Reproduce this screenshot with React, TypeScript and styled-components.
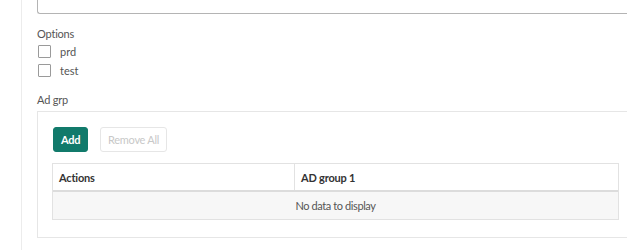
import React, { useState } from "react";
import styled, { createGlobalStyle } from "styled-components";

const GlobalStyle = createGlobalStyle`
  html, body {
    margin: 0;
    padding: 0;
    background: #ffffff;
    overflow: hidden;
  }
  body {
    font-family: Lato, "Open Sans", sans-serif;
    color: #555;
  }
`;

const Page = styled.div`
  display: flex;
  width: 627px;
  height: 250px;
  padding-left: 21px;
  box-sizing: border-box;
`;

const Column = styled.div`
  flex: 1;
  border-left: 1px solid #ececec;
  padding-left: 15px;
  display: flex;
  flex-direction: column;
`;

const TextField = styled.div`
  height: 13px;
  border: 1px solid #b4b4b4;
  border-top: none;
  border-right: none;
  border-bottom-left-radius: 3px;
`;

const Label = styled.div<{ $top: number }>`
  margin-top: ${(p) => p.$top}px;
  font-size: 11px;
  letter-spacing: -0.2px;
  line-height: 16px;
  color: #555;
`;

const CheckList = styled.div`
  display: flex;
  flex-direction: column;
  gap: 6px;
  margin-top: 3px;
`;

const CheckRow = styled.label`
  display: flex;
  align-items: center;
  gap: 9px;
  height: 13px;
  padding-left: 1px;
  font-size: 11px;
  color: #555;
  cursor: pointer;
`;

const Box = styled.span<{ $on: boolean }>`
  width: 11px;
  height: 11px;
  border: 1px solid #9a9a9a;
  border-radius: 1px;
  background: ${(p) => (p.$on ? "#117a6b" : "#fff")};
`;

const Panel = styled.div`
  margin-top: 3px;
  border: 1px solid #e6e6e6;
  border-right: none;
  padding: 15px 0 17px 14px;
  display: flex;
  flex-direction: column;
  align-items: flex-start;
  gap: 11px;
`;

const Toolbar = styled.div`
  display: flex;
  gap: 12px;
  padding-left: 1px;
`;

const Button = styled.button<{ $primary?: boolean }>`
  height: 25px;
  padding: 0 7px;
  border-radius: 3px;
  font-family: Lato, "Open Sans", sans-serif;
  font-size: 11px;
  letter-spacing: -0.3px;
  font-weight: ${(p) => (p.$primary ? 700 : 400)};
  border: 1px solid ${(p) => (p.$primary ? "#117a6b" : "#e6e6e6")};
  background: ${(p) => (p.$primary ? "#117a6b" : "#fff")};
  color: ${(p) => (p.$primary ? "#ffffff" : "#c8c8c8")};
  cursor: ${(p) => (p.$primary ? "pointer" : "default")};
`;

const Table = styled.div`
  width: 565px;
  border: 1px solid #e2e2e2;
  display: flex;
  flex-direction: column;
`;

const HeadRow = styled.div`
  display: grid;
  grid-template-columns: 241px 1fr;
  height: 26px;
  border-bottom: 2px solid #dcdcdc;
  background: #fff;
`;

const HeadCell = styled.div<{ $divider?: boolean }>`
  display: flex;
  align-items: center;
  padding-left: 6px;
  border-left: ${(p) => (p.$divider ? "1px solid #e2e2e2" : "none")};
  font-size: 11px;
  letter-spacing: -0.2px;
  font-weight: 700;
  color: #333;
`;

const EmptyRow = styled.div`
  height: 27px;
  display: flex;
  align-items: center;
  justify-content: center;
  background: #f7f7f7;
  font-size: 11px;
  letter-spacing: -0.4px;
  color: #555;
`;

const App = () => {
  const [opts, setOpts] = useState({ prd: false, test: false });
  const toggle = (k: "prd" | "test") => setOpts({ ...opts, [k]: !opts[k] });

  return (
    <>
      <GlobalStyle />
      <Page>
        <Column>
          <TextField />
          <Label $top={12}>Options</Label>
          <CheckList>
            <CheckRow onClick={() => toggle("prd")}>
              <Box $on={opts.prd} />
              prd
            </CheckRow>
            <CheckRow onClick={() => toggle("test")}>
              <Box $on={opts.test} />
              test
            </CheckRow>
          </CheckList>
          <Label $top={15}>Ad grp</Label>
          <Panel>
            <Toolbar>
              <Button $primary>Add</Button>
              <Button disabled>Remove All</Button>
            </Toolbar>
            <Table>
              <HeadRow>
                <HeadCell>Actions</HeadCell>
                <HeadCell $divider>AD group 1</HeadCell>
              </HeadRow>
              <EmptyRow>No data to display</EmptyRow>
            </Table>
          </Panel>
        </Column>
      </Page>
    </>
  );
};

export default App;
